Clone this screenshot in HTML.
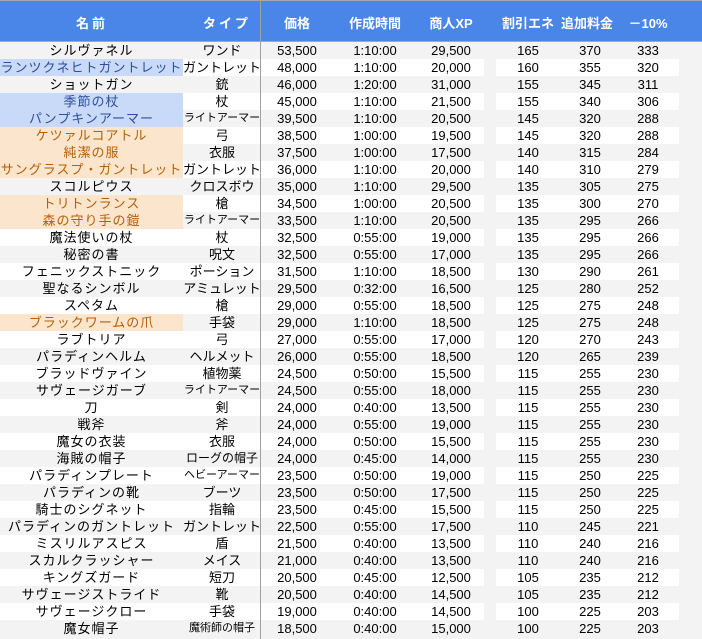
<!DOCTYPE html><html><head><meta charset="utf-8"><style>
*{margin:0;padding:0;box-sizing:border-box}
body{width:702px;height:639px;overflow:hidden;background:#f3f3f3;font-family:"Liberation Sans","Noto Sans CJK JP",sans-serif;font-size:13px;color:#000;position:relative}
.hd{position:absolute;left:0;top:0;width:702px;height:42px;background:#4a86e8;border-top:1px solid #a8a8a8;border-bottom:1px solid #9aa8c0}
.hd span{position:absolute;top:12px;color:#fff;font-weight:bold;font-size:13px;transform:translateX(-50%);white-space:nowrap}
.r{position:absolute;left:0;width:702px;height:17px}
.r.w .a{position:absolute;left:0;width:484px;height:17px;background:#fff}
.r.w .b{position:absolute;left:496px;width:183px;height:17px;background:#fff}
.c{position:absolute;top:0;height:17px;line-height:17px;transform:translateX(-50%);white-space:nowrap}
.nm{position:absolute;left:0;width:183px;height:17px;line-height:17px;text-align:center;white-space:nowrap;letter-spacing:1px}
.bl{background:#c9daf8;color:#2b4f9a}
.or{background:#fce5cd;color:#b45f06}
.vl{position:absolute;top:0;width:1px;height:639px;background:#a0a0a0}
.sm{font-size:11px}
.md{font-size:12px}
</style></head><body>
<div class="hd">
<span style="left:92px;letter-spacing:3px">名前</span>
<span style="left:227px;letter-spacing:3px">タイプ</span>
<span style="left:297px">価格</span>
<span style="left:375px">作成時間</span>
<span style="left:451px">商人XP</span>
<span style="left:528px">割引エネ</span>
<span style="left:587px">追加料金</span>
<span style="left:648px">－10%</span>
</div>
<div id="rows"></div>
<div class="vl" style="left:260px"></div>
<script>
var d=[
["シルヴァネル","ワンド","53,500","1:10:00","29,500","165","370","333",""],
["ランツクネヒトガントレット","ガントレット","48,000","1:10:00","20,000","160","355","320","bl"],
["ショットガン","銃","46,000","1:20:00","31,000","155","345","311",""],
["季節の杖","杖","45,000","1:10:00","21,500","155","340","306","bl"],
["パンプキンアーマー","ライトアーマー","39,500","1:10:00","20,500","145","320","288","bl"],
["ケツァルコアトル","弓","38,500","1:00:00","19,500","145","320","288","or"],
["純潔の服","衣服","37,500","1:00:00","17,500","140","315","284","or"],
["サングラスプ・ガントレット","ガントレット","36,000","1:10:00","20,000","140","310","279","or"],
["スコルピウス","クロスボウ","35,000","1:10:00","29,500","135","305","275",""],
["トリトンランス","槍","34,500","1:00:00","20,500","135","300","270","or"],
["森の守り手の鎧","ライトアーマー","33,500","1:10:00","20,500","135","295","266","or"],
["魔法使いの杖","杖","32,500","0:55:00","19,000","135","295","266",""],
["秘密の書","呪文","32,500","0:55:00","17,000","135","295","266",""],
["フェニックストニック","ポーション","31,500","1:10:00","18,500","130","290","261",""],
["聖なるシンボル","アミュレット","29,500","0:32:00","16,500","125","280","252",""],
["スペタム","槍","29,000","0:55:00","18,500","125","275","248",""],
["ブラックワームの爪","手袋","29,000","1:10:00","18,500","125","275","248","or"],
["ラブトリア","弓","27,000","0:55:00","17,000","120","270","243",""],
["パラディンヘルム","ヘルメット","26,000","0:55:00","18,500","120","265","239",""],
["ブラッドヴァイン","植物薬","24,500","0:50:00","15,500","115","255","230",""],
["サヴェージガーブ","ライトアーマー","24,500","0:55:00","18,000","115","255","230",""],
["刀","剣","24,000","0:40:00","13,500","115","255","230",""],
["戦斧","斧","24,000","0:55:00","19,000","115","255","230",""],
["魔女の衣装","衣服","24,000","0:50:00","15,500","115","255","230",""],
["海賊の帽子","ローグの帽子","24,000","0:45:00","14,000","115","255","230",""],
["パラディンプレート","ヘビーアーマー","23,500","0:50:00","19,000","115","250","225",""],
["パラディンの靴","ブーツ","23,500","0:50:00","17,500","115","250","225",""],
["騎士のシグネット","指輪","23,500","0:45:00","15,500","115","250","225",""],
["パラディンのガントレット","ガントレット","22,500","0:55:00","17,500","110","245","221",""],
["ミスリルアスピス","盾","21,500","0:40:00","13,500","110","240","216",""],
["スカルクラッシャー","メイス","21,000","0:40:00","13,500","110","240","216",""],
["キングズガード","短刀","20,500","0:45:00","12,500","105","235","212",""],
["サヴェージストライド","靴","20,500","0:40:00","14,500","105","235","212",""],
["サヴェージクロー","手袋","19,000","0:40:00","14,500","100","225","203",""],
["魔女帽子","魔術師の帽子","18,500","0:40:00","15,000","100","225","203",""]];
var xs=[222,297,375,451,528,590,648],h="";
d.forEach(function(r,i){
 h+='<div class="r'+(i%2?' w':'')+'" style="top:'+(42+i*17)+'px"><div class="a"></div><div class="b"></div>';
 h+='<div class="nm '+r[8]+'">'+r[0]+'</div>';
 for(var j=1;j<8;j++){var s='',x=xs[j-1];
  if(j==1){x=222;if(r[1].length>=7||r[1]=='魔術師の帽子')s=' sm';else if(r[1]=='ローグの帽子')s=' md';}
  h+='<div class="c'+s+'" style="left:'+x+'px">'+r[j]+'</div>';}
 h+='</div>';});
document.getElementById('rows').innerHTML=h;
</script>
</body></html>
